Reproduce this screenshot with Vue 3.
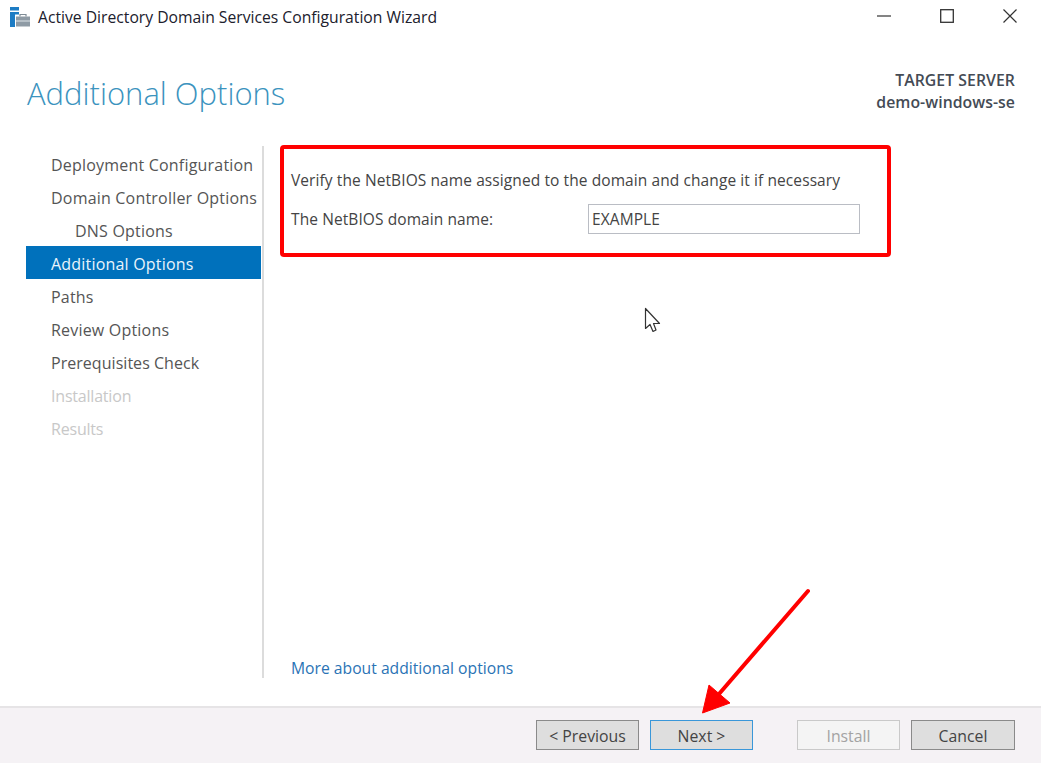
<script setup>
const steps = [
  { label: 'Deployment Configuration' },
  { label: 'Domain Controller Options' },
  { label: 'DNS Options', sub: true },
  { label: 'Additional Options', active: true },
  { label: 'Paths' },
  { label: 'Review Options' },
  { label: 'Prerequisites Check', tight: true },
  { label: 'Installation', off: true },
  { label: 'Results', off: true },
]
</script>

<template>
  <div class="wizard">
    <header class="titlebar">
      <svg class="appicon" width="20" height="20" viewBox="0 0 20 20">
        <rect x="0" y="0" width="9" height="3.5" fill="#1d7cc4" />
        <rect x="0" y="5" width="5" height="15" fill="#1d7cc4" />
        <rect x="5" y="5" width="4" height="2.5" fill="#1d7cc4" />
        <path d="M10 9.5V7.5h6v2" fill="none" stroke="#7f8c96" stroke-width="1.2" />
        <rect x="6" y="9.5" width="14" height="10" fill="#8f9ba5" />
        <rect x="6" y="13.5" width="14" height="1" fill="#dfe5ea" />
      </svg>
      <span class="wintitle">Active Directory Domain Services Configuration Wizard</span>
      <div class="controls">
        <svg width="14" height="14" viewBox="0 0 14 14"><path d="M0 7h14" stroke="#333" stroke-width="1.2" /></svg>
        <svg width="14" height="14" viewBox="0 0 14 14"><rect x=".7" y=".7" width="12.6" height="12.6" fill="none" stroke="#333" stroke-width="1.3" /></svg>
        <svg width="14" height="14" viewBox="0 0 14 14"><path d="M.5.5l13 13M13.500.5l-13 13" stroke="#333" stroke-width="1.2" /></svg>
      </div>
    </header>

    <section class="heading">
      <h1>Additional Options</h1>
      <div class="server">
        <div>TARGET SERVER</div>
        <div class="name">demo-windows-se</div>
      </div>
    </section>

    <section class="body">
      <nav class="steps">
        <div
          v-for="s in steps"
          :key="s.label"
          class="step"
          :class="{ sub: s.sub, active: s.active, off: s.off, tight: s.tight }"
        >{{ s.label }}</div>
      </nav>
      <main class="content">
        <div class="callout">
          <p>Verify the NetBIOS name assigned to the domain and change it if necessary</p>
          <div class="field">
            <label>The NetBIOS domain name:</label>
            <div class="input">EXAMPLE</div>
          </div>
        </div>
        <a class="more">More about additional options</a>
      </main>
    </section>

    <footer class="footer">
      <button class="btn">&lt; Previous</button>
      <button class="btn next">Next &gt;</button>
      <button class="btn disabled">Install</button>
      <button class="btn cancel">Cancel</button>
    </footer>

    <svg class="cursor" width="20" height="28" viewBox="0 0 20 28">
      <path d="M1.500 1.500V21.500L6 17.500L9 24.500L12 23L9.500 16.500H15.500Z" fill="#fff" stroke="#333" stroke-width="1.200" stroke-linejoin="round" />
    </svg>
    <svg class="arrow" width="120" height="136" viewBox="0 0 120 136">
      <path d="M110 3L21 106" stroke="#f00" stroke-width="4" stroke-linecap="round" />
      <path d="M4.500 125L11 97L32 115Z" fill="#f00" stroke="#f00" stroke-width="1" stroke-linejoin="round" />
    </svg>
  </div>
</template>

<style scoped>
.wizard {
  position: relative;
  width: 1041px;
  height: 763px;
  overflow: hidden;
  background: #fff;
  display: flex;
  flex-direction: column;
  font-family: "Open Sans", sans-serif;
  font-size: 15.5px;
  letter-spacing: .09px;
  color: #444;
}
.titlebar {
  height: 34px;
  display: flex;
  align-items: center;
  padding: 0 24px 0 10px;
  flex: none;
}
.appicon { flex: none; }
.wintitle {
  margin-left: 8px;
  font-size: 15.7px;
  letter-spacing: 0;
  color: #20202c;
}
.controls {
  margin-left: auto;
  margin-bottom: 3px;
  display: flex;
  gap: 49px;
}
.heading {
  height: 112px;
  flex: none;
  display: flex;
  justify-content: space-between;
  padding: 0 26px 0 27px;
}
h1 {
  margin: 38px 0 0;
  font-size: 31px;
  line-height: 42px;
  font-weight: 300;
  letter-spacing: 0;
  color: #3b93be;
}
.server {
  margin-top: 35px;
  text-align: right;
  font-weight: 600;
  line-height: 22px;
  font-size: 15.8px;
  letter-spacing: .05px;
  color: #444b55;
}
.body {
  flex: 1;
  display: flex;
  padding-left: 26px;
  min-height: 0;
}
.steps {
  width: 235px;
  flex: none;
  padding-top: 1px;
}
.step {
  height: 33px;
  line-height: 37px;
  padding-left: 25px;
  white-space: nowrap;
  font-size: 16px;
  letter-spacing: .2px;
  color: #555;
}
.step.sub { padding-left: 49px; }
.step.active { background: #0071bc; color: #eaf4fb; }
.step.tight { letter-spacing: .04px; }
.step.off { color: #c8c8c8; letter-spacing: -.2px; }
.content {
  margin-left: 1px;
  border-left: 2px solid #dcdcdc;
  flex: 1;
  height: 532px;
  padding: 0 150px 0 16px;
  display: flex;
  flex-direction: column;
}
.callout {
  width: 611px;
  height: 112px;
  margin-top: -1px;
  box-sizing: border-box;
  border: 4px solid #f00;
  border-radius: 4px;
  padding: 19px 7px 0;
}
.callout p {
  margin: 0;
  line-height: 24px;
  white-space: nowrap;
}
.field {
  display: flex;
  align-items: center;
  margin-top: 12px;
}
.field label {
  width: 297px;
  flex: none;
}
.input {
  width: 272px;
  height: 30px;
  box-sizing: border-box;
  border: 1.500px solid #babdc4;
  padding-left: 3px;
  line-height: 28px;
}
.more {
  margin: auto 0 -1px 11px;
  color: #2a73b5;
  font-size: 15.700px;
  letter-spacing: 0;
  line-height: 22px;
  white-space: nowrap;
}
.footer {
  height: 57px;
  flex: none;
  box-sizing: border-box;
  background: #f5f2f5;
  border-top: 2px solid #e6e4e6;
  display: flex;
  align-items: flex-start;
  padding: 12px 26px 0 536px;
  gap: 11px;
}
.btn {
  width: 103px;
  height: 30px;
  box-sizing: border-box;
  background: #dedede;
  border: 1.500px solid #8a8a8a;
  font: inherit;
  font-size: 15.800px;
  letter-spacing: 0;
  line-height: 28px;
  color: #444;
  padding: 1px 0 0;
}
.btn.next { border-color: #3a97d9; }
.btn.cancel { width: 104px; }
.btn.disabled {
  margin-left: 33px;
  background: #f4f4f4;
  border-color: #c9c9c9;
  color: #a3a3a3;
}
.cursor { position: absolute; left: 644px; top: 307px; }
.arrow { position: absolute; left: 698px; top: 588px; }
</style>
